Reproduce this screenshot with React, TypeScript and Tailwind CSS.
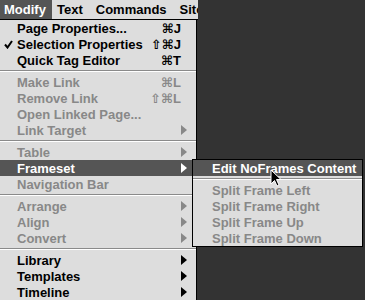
import React from "react";

type Item =
  | { kind: "sep" }
  | {
      kind: "item";
      label: string;
      shortcut?: string;
      sub?: boolean;
      disabled?: boolean;
      checked?: boolean;
      active?: boolean;
    };

const mainItems: Item[] = [
  { kind: "item", label: "Page Properties...", shortcut: "⌘J" },
  { kind: "item", label: "Selection Properties", shortcut: "⇧⌘J", checked: true },
  { kind: "item", label: "Quick Tag Editor", shortcut: "⌘T" },
  { kind: "sep" },
  { kind: "item", label: "Make Link", shortcut: "⌘L", disabled: true },
  { kind: "item", label: "Remove Link", shortcut: "⇧⌘L", disabled: true },
  { kind: "item", label: "Open Linked Page...", disabled: true },
  { kind: "item", label: "Link Target", sub: true, disabled: true },
  { kind: "sep" },
  { kind: "item", label: "Table", sub: true, disabled: true },
  { kind: "item", label: "Frameset", sub: true, active: true },
  { kind: "item", label: "Navigation Bar", disabled: true },
  { kind: "sep" },
  { kind: "item", label: "Arrange", sub: true, disabled: true },
  { kind: "item", label: "Align", sub: true, disabled: true },
  { kind: "item", label: "Convert", sub: true, disabled: true },
  { kind: "sep" },
  { kind: "item", label: "Library", sub: true },
  { kind: "item", label: "Templates", sub: true },
  { kind: "item", label: "Timeline", sub: true },
];

const subItems: Item[] = [
  { kind: "item", label: "Edit NoFrames Content", active: true },
  { kind: "sep" },
  { kind: "item", label: "Split Frame Left", disabled: true },
  { kind: "item", label: "Split Frame Right", disabled: true },
  { kind: "item", label: "Split Frame Up", disabled: true },
  { kind: "item", label: "Split Frame Down", disabled: true },
];

const Separator = () => (
  <div className="h-[6px] flex flex-col justify-center">
    <div className="h-[1px] bg-[#8a8a8a]" />
    <div className="h-[1px] bg-white" />
  </div>
);

const Arrow = ({ color }: { color: string }) => (
  <svg width="6" height="10" viewBox="0 0 6 10" className="shrink-0">
    <polygon points="0,0 6,5 0,10" fill={color} />
  </svg>
);

const Check = () => (
  <svg width="9" height="9" viewBox="0 0 9 9">
    <polyline points="1,4.5 3.5,7.5 8,1" fill="none" stroke="#000" strokeWidth="2" />
  </svg>
);

const MenuRow = ({ item, indent }: { item: Item; indent: string }) => {
  if (item.kind === "sep") return <Separator />;
  const color = item.active ? "text-white" : item.disabled ? "text-[#888888]" : "text-black";
  const arrowColor = item.active ? "#ffffff" : item.disabled ? "#888888" : "#000000";
  return (
    <div
      className={`h-[16px] flex items-center ${item.active ? "bg-[#555555]" : ""} ${color}`}
    >
      <div className={`${indent} shrink-0 flex justify-center`}>{item.checked && <Check />}</div>
      <span className="flex-1 whitespace-nowrap leading-none">{item.label}</span>
      {item.shortcut && (
        <span className="pr-[15px] whitespace-nowrap leading-none">{item.shortcut}</span>
      )}
      {item.sub && (
        <span className="pr-[9px] flex items-center">
          <Arrow color={arrowColor} />
        </span>
      )}
    </div>
  );
};

export default function App() {
  return (
    <div className="w-[365px] h-[300px] bg-[#333333] overflow-hidden relative font-['Liberation_Sans','DejaVu_Sans',sans-serif] font-bold text-[13px]">
      {/* menu bar */}
      <div className="w-[198px] h-[20px] bg-[#dddddd] border-b border-black flex items-center overflow-hidden whitespace-nowrap">
        <div className="h-[19px] w-[52px] shrink-0 bg-[#555555] text-white flex items-center pl-[4px]">
          Modify
        </div>
        <span className="ml-[5px] shrink-0 text-black">Text</span>
        <span className="ml-[13px] shrink-0 text-black">Commands</span>
        <span className="ml-[13px] shrink-0 text-black">Site</span>
      </div>

      {/* Modify menu */}
      <div className="relative">
        <div className="w-[197px] bg-[#dddddd] border-r border-black">
          {mainItems.map((item, i) => (
            <MenuRow key={i} item={item} indent="w-[17px]" />
          ))}
        </div>

        {/* Frameset submenu */}
        <div className="absolute left-[192px] top-[139px] w-[171px] bg-[#dddddd] border border-black">
          {subItems.map((item, i) => (
            <MenuRow key={i} item={item} indent="w-[19px]" />
          ))}
        </div>

        {/* pointer */}
        <svg
          width="12"
          height="19"
          viewBox="0 0 12 19"
          className="absolute left-[270px] top-[149px]"
        >
          <path
            d="M1 1 L1 15 L4.5 11.5 L7 17 L9 16 L6.5 10.5 L11 10.5 Z"
            fill="#000"
            stroke="#fff"
            strokeWidth="1"
          />
        </svg>
      </div>
    </div>
  );
}
